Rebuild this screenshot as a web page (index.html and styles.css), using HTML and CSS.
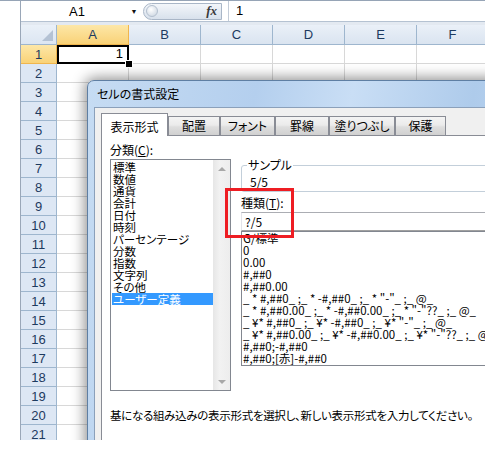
FILE: index.html
```html
<!DOCTYPE html>
<html lang="ja">
<head>
<meta charset="utf-8">
<title>セルの書式設定</title>
<link rel="stylesheet" href="styles.css">
</head>
<body>
<div class="screen">
  <div class="excel">
    <div class="strip"></div>
    <div class="main">
      <div class="fbar">
        <div class="namebox"><span class="ref">A1</span><span class="dd">▼</span></div>
        <div class="pill"><span class="knob"></span><span class="fx">fx</span></div>
        <div class="fval">1</div>
      </div>
      <div class="fgap"></div>
      <div class="grid">
        <div class="corner"><span class="tri"></span></div>
        <div class="ch sel">A</div><div class="ch">B</div><div class="ch">C</div><div class="ch">D</div><div class="ch">E</div><div class="ch">F</div>
        <div class="rh sel">1</div><div class="c a1">1<span class="selbox"></span><span class="handle"></span></div><div class="c"></div><div class="c"></div><div class="c"></div><div class="c"></div><div class="c"></div>
        <div class="rh">2</div><div class="c"></div><div class="c"></div><div class="c"></div><div class="c"></div><div class="c"></div><div class="c"></div>
        <div class="rh">3</div><div class="c"></div><div class="c"></div><div class="c"></div><div class="c"></div><div class="c"></div><div class="c"></div>
        <div class="rh">4</div><div class="c"></div><div class="c"></div><div class="c"></div><div class="c"></div><div class="c"></div><div class="c"></div>
        <div class="rh">5</div><div class="c"></div><div class="c"></div><div class="c"></div><div class="c"></div><div class="c"></div><div class="c"></div>
        <div class="rh">6</div><div class="c"></div><div class="c"></div><div class="c"></div><div class="c"></div><div class="c"></div><div class="c"></div>
        <div class="rh">7</div><div class="c"></div><div class="c"></div><div class="c"></div><div class="c"></div><div class="c"></div><div class="c"></div>
        <div class="rh">8</div><div class="c"></div><div class="c"></div><div class="c"></div><div class="c"></div><div class="c"></div><div class="c"></div>
        <div class="rh">9</div><div class="c"></div><div class="c"></div><div class="c"></div><div class="c"></div><div class="c"></div><div class="c"></div>
        <div class="rh">10</div><div class="c"></div><div class="c"></div><div class="c"></div><div class="c"></div><div class="c"></div><div class="c"></div>
        <div class="rh">11</div><div class="c"></div><div class="c"></div><div class="c"></div><div class="c"></div><div class="c"></div><div class="c"></div>
        <div class="rh">12</div><div class="c"></div><div class="c"></div><div class="c"></div><div class="c"></div><div class="c"></div><div class="c"></div>
        <div class="rh">13</div><div class="c"></div><div class="c"></div><div class="c"></div><div class="c"></div><div class="c"></div><div class="c"></div>
        <div class="rh">14</div><div class="c"></div><div class="c"></div><div class="c"></div><div class="c"></div><div class="c"></div><div class="c"></div>
        <div class="rh">15</div><div class="c"></div><div class="c"></div><div class="c"></div><div class="c"></div><div class="c"></div><div class="c"></div>
        <div class="rh">16</div><div class="c"></div><div class="c"></div><div class="c"></div><div class="c"></div><div class="c"></div><div class="c"></div>
        <div class="rh">17</div><div class="c"></div><div class="c"></div><div class="c"></div><div class="c"></div><div class="c"></div><div class="c"></div>
        <div class="rh">18</div><div class="c"></div><div class="c"></div><div class="c"></div><div class="c"></div><div class="c"></div><div class="c"></div>
        <div class="rh">19</div><div class="c"></div><div class="c"></div><div class="c"></div><div class="c"></div><div class="c"></div><div class="c"></div>
        <div class="rh">20</div><div class="c"></div><div class="c"></div><div class="c"></div><div class="c"></div><div class="c"></div><div class="c"></div>
        <div class="rh">21</div><div class="c"></div><div class="c"></div><div class="c"></div><div class="c"></div><div class="c"></div><div class="c"></div>
      </div>
    </div>
  </div>

  <div class="dialog">
    <div class="titlebar">セルの書式設定</div>
    <div class="client">
      <div class="tabs">
        <div class="tab active">表示形式</div>
        <div class="tab">配置</div>
        <div class="tab">フォント</div>
        <div class="tab">罫線</div>
        <div class="tab">塗りつぶし</div>
        <div class="tab">保護</div>
      </div>
      <div class="panel">
        <div class="panel-body">
          <div class="left">
            <div class="lbl">分類(<u>C</u>):</div>
            <div class="catlist">
              <div class="items">
                <div class="item">標準</div>
                <div class="item">数値</div>
                <div class="item">通貨</div>
                <div class="item">会計</div>
                <div class="item">日付</div>
                <div class="item">時刻</div>
                <div class="item">パーセンテージ</div>
                <div class="item">分数</div>
                <div class="item">指数</div>
                <div class="item">文字列</div>
                <div class="item">その他</div>
                <div class="item sel">ユーザー定義</div>
              </div>
              <div class="scroll">
                <div class="sbtn"><span class="arr up"></span></div>
                <div class="sbtn"><span class="arr down"></span></div>
              </div>
            </div>
          </div>
          <div class="right">
            <div class="sample">
              <div class="sample-box"><div class="sample-val">5/5</div></div>
              <span class="sample-title">サンプル</span>
            </div>
            <div class="lbl kind">種類(<u>T</u>):</div>
            <div class="input">?/5</div>
            <div class="fmtlist">
              <div class="fl">G/標準</div>
              <div class="fl">0</div>
              <div class="fl">0.00</div>
              <div class="fl">#,##0</div>
              <div class="fl">#,##0.00</div>
              <div class="fl">_ * #,##0_ ;_ * -#,##0_ ;_ * "-"_ ;_ @_ </div>
              <div class="fl">_ * #,##0.00_ ;_ * -#,##0.00_ ;_ * "-"??_ ;_ @_ </div>
              <div class="fl">_ ¥* #,##0_ ;_ ¥* -#,##0_ ;_ ¥* "-"_ ;_ @_ </div>
              <div class="fl">_ ¥* #,##0.00_ ;_ ¥* -#,##0.00_ ;_ ¥* "-"??_ ;_ @_ </div>
              <div class="fl">#,##0;-#,##0</div>
              <div class="fl">#,##0;[赤]-#,##0</div>
            </div>
          </div>
        </div>
        <div class="hint">基になる組み込みの表示形式を選択し、新しい表示形式を入力してください。</div>
      </div>
    </div>
  </div>

  <div class="callout"></div>
</div>
</body>
</html>
```

FILE: styles.css
```css
* { box-sizing: border-box; }
html, body { margin: 0; padding: 0; background: #fff; }
body {
  width: 485px;
  height: 450px;
  overflow: hidden;
  font-family: "Liberation Sans", Arial, sans-serif;
}
.screen {
  position: relative;
  width: 485px;
  height: 440px;
  overflow: hidden;
  background: #fff;
}

/* ---------- Excel ---------- */
.excel {
  display: flex;
  height: 440px;
  border-top: 1px solid #96a4b6;
}
.strip {
  width: 21px;
  flex: none;
  background: #fff;
  border-right: 1px solid #9aa7b8;
}
.main {
  flex: 1;
  min-width: 0;
  display: flex;
  flex-direction: column;
}
.fbar {
  height: 20px;
  flex: none;
  display: flex;
  align-items: center;
  background: #fff;
}
.namebox {
  width: 114px;
  margin-left: 7px;
  height: 20px;
  display: flex;
  align-items: center;
}
.ref {
  flex: 1;
  text-align: center;
  font-size: 13px;
  color: #000;
}
.dd {
  width: 16px;
  text-align: center;
  font-size: 7px;
  color: #111;
}
.pill {
  width: 79px;
  height: 17px;
  margin-left: 1px;
  border: 1px solid #a9b6c7;
  border-radius: 9px 0 0 9px;
  background: linear-gradient(#f3f6fa, #d8e1ec);
  display: flex;
  align-items: center;
  justify-content: space-between;
  padding: 0 4px 0 2px;
}
.knob {
  width: 12px;
  height: 12px;
  border-radius: 50%;
  border: 1px solid #b3bfce;
  background: radial-gradient(circle at 40% 35%, #ffffff, #c6d1de);
}
.fx {
  font-family: "Liberation Serif", "Times New Roman", serif;
  font-style: italic;
  font-weight: bold;
  font-size: 13px;
  color: #3a3a3a;
}
.fval {
  flex: 1;
  height: 20px;
  margin-left: 6px;
  border-left: 1px solid #c3ccd8;
  padding-left: 7px;
  font-size: 13px;
  line-height: 20px;
  color: #000;
}
.fgap {
  height: 4px;
  flex: none;
  background: #e3e9f1;
  border-top: 1px solid #b5c2d2;
}
.grid {
  display: grid;
  grid-template-columns: 36px repeat(6, 72px);
  grid-template-rows: 20px;
  grid-auto-rows: 19px;
}
.corner, .ch, .rh {
  border-right: 1px solid #9eb6ce;
  border-bottom: 1px solid #9eb6ce;
  color: #1d3a5f;
  font-size: 13px;
}
.corner {
  background: linear-gradient(#eaf0f8, #dce6f2);
  position: relative;
}
.tri {
  position: absolute;
  right: 3px;
  bottom: 3px;
  width: 11px;
  height: 11px;
  background: #b4c2d4;
  clip-path: polygon(100% 0, 100% 100%, 0 100%);
}
.ch {
  display: flex;
  align-items: center;
  justify-content: center;
  background: linear-gradient(#eaf0f8, #dae4f0);
}
.rh {
  display: flex;
  align-items: center;
  justify-content: center;
  background: #dde7f4;
}
.ch.sel, .rh.sel {
  background: linear-gradient(#fde7a8, #f9d277);
  border-color: #f0b64e;
}
.c {
  border-right: 1px solid #d8d8d8;
  border-bottom: 1px solid #d8d8d8;
  background: #fff;
}
.a1 {
  position: relative;
  text-align: right;
  padding-right: 5px;
  font-size: 13px;
  line-height: 18px;
  color: #000;
}
.selbox {
  position: absolute;
  left: 0;
  top: 0;
  right: -1px;
  bottom: -1px;
  border: 2px solid #000;
}
.handle {
  position: absolute;
  right: -4px;
  bottom: -4px;
  width: 6px;
  height: 6px;
  background: #000;
  outline: 1px solid #fff;
}

/* ---------- Dialog ---------- */
.dialog {
  position: absolute;
  left: 87px;
  top: 80px;
  width: 420px;
  height: 380px;
  border: 1px solid #5f7fa3;
  border-radius: 7px 7px 0 0;
  background: linear-gradient(100deg, #c6dcf3 0%, #b4cfee 35%, #c9def5 55%, #aecbeb 80%, #bcd5f0 100%);
  box-shadow: 0 0 14px 2px rgba(0, 0, 0, 0.45);
  padding-left: 6px;
  display: flex;
  flex-direction: column;
  font-family: "Noto Sans CJK JP", "Noto Sans", sans-serif;
  font-feature-settings: "palt";
  font-size: 12px;
  color: #000;
  z-index: 2;
}
.titlebar {
  height: 26px;
  flex: none;
  line-height: 26px;
  padding-left: 3px;
  font-size: 12px;
  color: #000;
}
.client {
  flex: 1;
  border-top: 1px solid #8ba0ba;
  border-left: 1px solid #8ba0ba;
  background: #f0f0f0;
}
.tabs {
  display: flex;
  align-items: flex-end;
  height: 28px;
  padding: 5px 0 0 6px;
  margin-bottom: -1px;
  position: relative;
  z-index: 1;
}
.tab {
  height: 19px;
  margin-bottom: 1px;
  border: 1px solid #898c95;
  border-bottom: none;
  background: linear-gradient(#f4f4f4, #ebebeb 45%, #dedede 55%, #d0d0d0);
  text-align: center;
  line-height: 18px;
  white-space: nowrap;
}
.tab.active {
  height: 23px;
  margin-bottom: 0;
  background: #fff;
  padding-top: 4px;
  line-height: 18px;
}
.tab:nth-child(1) { width: 67px; }
.tab:nth-child(2) { width: 52px; }
.tab:nth-child(3) { width: 55px; }
.tab:nth-child(4) { width: 54px; }
.tab:nth-child(5) { width: 66px; }
.tab:nth-child(6) { width: 51px; }

.panel {
  margin-left: 6px;
  height: 320px;
  border-top: 1px solid #898c95;
  border-left: 1px solid #898c95;
  background: #fff;
  padding: 7px 0 0 8px;
}
.panel-body {
  display: grid;
  grid-template-columns: 121px 1fr;
  column-gap: 10px;
  align-items: start;
}
.lbl {
  line-height: 14px;
  height: 14px;
}
.lbl u { text-decoration: underline; }
.catlist {
  margin-top: 2px;
  width: 121px;
  height: 232px;
  border: 1px solid #828790;
  display: flex;
  background: #fff;
}
.items {
  flex: 1;
  padding: 1px 0 0 1px;
  font-size: 11.5px;
}
.item {
  height: 12px;
  line-height: 12px;
  padding-left: 1px;
  white-space: nowrap;
}
.item.sel {
  background: #3399ff;
  color: #fff;
}
.scroll {
  width: 17px;
  flex: none;
  background: linear-gradient(to right, #e6e6e6, #f2f2f2 40%, #ededed);
  display: flex;
  flex-direction: column;
  justify-content: space-between;
}
.sbtn {
  height: 17px;
  display: flex;
  align-items: center;
  justify-content: center;
}
.arr {
  width: 0;
  height: 0;
  border-left: 4px solid transparent;
  border-right: 4px solid transparent;
}
.arr.up { border-bottom: 4px solid #a8a8a8; }
.arr.down { border-top: 4px solid #a8a8a8; }

.right {
  margin-top: 15px;
  min-width: 0;
}
.sample {
  position: relative;
  padding-top: 7px;
}
.sample-box {
  height: 27px;
  border: 1px solid #c3cfda;
  border-radius: 3px;
  padding: 9px 0 0 8px;
}
.sample-val {
  line-height: 14px;
}
.sample-title {
  position: absolute;
  left: 6px;
  top: 0;
  padding: 0 1px;
  line-height: 14px;
  background: #fff;
}
.kind {
  margin-top: 4px;
}
.input {
  margin-top: 2px;
  height: 19px;
  border: 1px solid;
  border-color: #abadb3 #dbdfe6 #a0a0a0 #e2e3ea;
  padding-left: 3px;
  line-height: 17px;
  background: #fff;
}
.fmtlist {
  height: 135px;
  border: 1px solid #828790;
  overflow: hidden;
  padding-left: 1px;
  background: #fff;
  font-size: 11.5px;
}
.fl {
  height: 12px;
  line-height: 12px;
  white-space: pre;
}
.hint {
  margin-top: 17px;
  line-height: 14px;
  white-space: nowrap;
  font-size: 11.5px;
  letter-spacing: -0.3px;
}

/* ---------- Annotation ---------- */
.callout {
  position: absolute;
  left: 225px;
  top: 188px;
  width: 69px;
  height: 50px;
  border: 3px solid #ee1d23;
  z-index: 5;
}
```
